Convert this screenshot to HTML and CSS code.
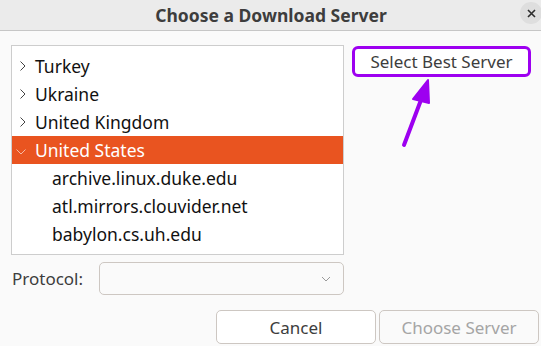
FILE: index.html
```html
<!DOCTYPE html>
<html lang="en">
<head>
  <meta charset="UTF-8">
  <title>Choose a Download Server</title>
  <link rel="stylesheet" href="styles.css">
</head>
<body>
  <div class="dialog">
    <div class="titlebar">
      <span class="title">Choose a Download Server</span>
      <span class="close">
        <svg width="9" height="9" viewBox="0 0 9 9"><path d="M1 1 L8 8 M8 1 L1 8" stroke="#2e2e2e" stroke-width="1.6"/></svg>
      </span>
    </div>

    <div class="content">
      <div class="top">
        <div class="list">
          <div class="row">
            <svg class="chev" width="6" height="10" viewBox="0 0 6 10"><path d="M0.5 0.5 L5 5 L0.5 9.5" fill="none" stroke="#444" stroke-width="1"/></svg>Turkey
          </div>
          <div class="row">
            <svg class="chev" width="6" height="10" viewBox="0 0 6 10"><path d="M0.5 0.5 L5 5 L0.5 9.5" fill="none" stroke="#444" stroke-width="1"/></svg>Ukraine
          </div>
          <div class="row">
            <svg class="chev" width="6" height="10" viewBox="0 0 6 10"><path d="M0.5 0.5 L5 5 L0.5 9.5" fill="none" stroke="#444" stroke-width="1"/></svg>United Kingdom
          </div>
          <div class="row selected">
            <svg class="chev open" width="10" height="6" viewBox="0 0 10 6"><path d="M0.5 0.5 L5 5 L9.5 0.5" fill="none" stroke="#f6b9a4" stroke-width="1"/></svg>United States
          </div>
          <div class="row child">archive.linux.duke.edu</div>
          <div class="row child">atl.mirrors.clouvider.net</div>
          <div class="row child">babylon.cs.uh.edu</div>
        </div>
        <div class="side">
          <button type="button" class="best">Select Best Server</button>
        </div>
      </div>

      <div class="protocol">
        <label for="proto">Protocol:</label>
        <div class="combo" id="proto">
          <svg width="10" height="6" viewBox="0 0 10 6"><path d="M1 1 L5 5 L9 1" fill="none" stroke="#9a9a9a" stroke-width="1"/></svg>
        </div>
      </div>

      <div class="buttons">
        <button type="button" class="btn">Cancel</button>
        <button type="button" class="btn disabled">Choose Server</button>
      </div>
    </div>

    <!-- annotation arrow -->
    <svg class="arrow" width="541" height="346" viewBox="0 0 541 346">
      <line x1="404" y1="145" x2="424" y2="92" stroke="#9d00f0" stroke-width="4" stroke-linecap="round"/>
      <polygon points="428,80 413,99 429,103" fill="#9d00f0" stroke="#9d00f0" stroke-width="2" stroke-linejoin="round"/>
    </svg>
  </div>
</body>
</html>
```

FILE: styles.css
```css
body {
  margin: 0;
  font-family: "Noto Sans", "DejaVu Sans", sans-serif;
  background-color: #fafafa;
}

.dialog {
  position: relative;
  width: 541px;
  height: 346px;
  overflow: hidden;
  background-color: #fafafa;
}

.titlebar {
  height: 30px;
  background-color: #ebebeb;
  border-bottom: 1px solid #c6c6c6;
  display: flex;
  align-items: center;
  justify-content: center;
  position: relative;
}

.title {
  font-weight: bold;
  font-size: 17.5px;
  color: #3d3d3d;
  margin-left: 1px;
}

.close {
  position: absolute;
  right: -1px;
  top: 2px;
  width: 22px;
  height: 22px;
  border-radius: 50%;
  background-color: #dedede;
  display: flex;
  align-items: center;
  justify-content: center;
}

.content {
  padding: 14px 10px 0 11px;
}

.top {
  display: flex;
  gap: 8px;
}

.list {
  width: 334px;
  height: 210px;
  padding-top: 6px;
  box-sizing: border-box;
  background-color: #fff;
  border: 1px solid #cdcdcd;
  overflow: hidden;
}

.row {
  height: 28px;
  line-height: 28px;
  font-size: 17.5px;
  color: #111;
  white-space: nowrap;
  padding-left: 8px;
  display: flex;
  align-items: center;
}

.chev {
  margin-right: 9px;
  flex-shrink: 0;
}

.chev.open {
  margin-left: -4px;
  margin-right: 9px;
  margin-top: 3px;
}

.selected {
  background-color: #e95420;
  color: #fff;
}

.child {
  padding-left: 40px;
}

.best {
  width: 179px;
  height: 31px;
  margin-top: 1px;
  background-color: #fff;
  border: 3px solid #9d00f0;
  border-radius: 6px;
  font-family: inherit;
  font-size: 17px;
  color: #3d3d3d;
  padding: 0;
}

.protocol {
  display: flex;
  align-items: center;
  margin-top: 7px;
  gap: 10px;
}

.protocol label {
  font-size: 17px;
  color: #3d3d3d;
  width: 77px;
  padding-left: 1px;
}

.combo {
  width: 245px;
  height: 33px;
  background-color: #fafafa;
  border: 1px solid #cdc7c2;
  border-radius: 5px;
  display: flex;
  align-items: center;
  justify-content: flex-end;
  padding-right: 12px;
  box-sizing: border-box;
}

.buttons {
  display: flex;
  justify-content: flex-end;
  gap: 3px;
  margin-top: 15px;
  margin-right: -8px;
}

.btn {
  width: 160px;
  height: 34px;
  background-color: #fff;
  border: 1px solid #cdc7c2;
  border-radius: 5px;
  font-family: inherit;
  font-size: 17px;
  color: #3d3d3d;
}

.btn.disabled {
  background-color: #fafafa;
  color: #a5a5a5;
}

.arrow {
  position: absolute;
  left: 0;
  top: 0;
  pointer-events: none;
}
```
